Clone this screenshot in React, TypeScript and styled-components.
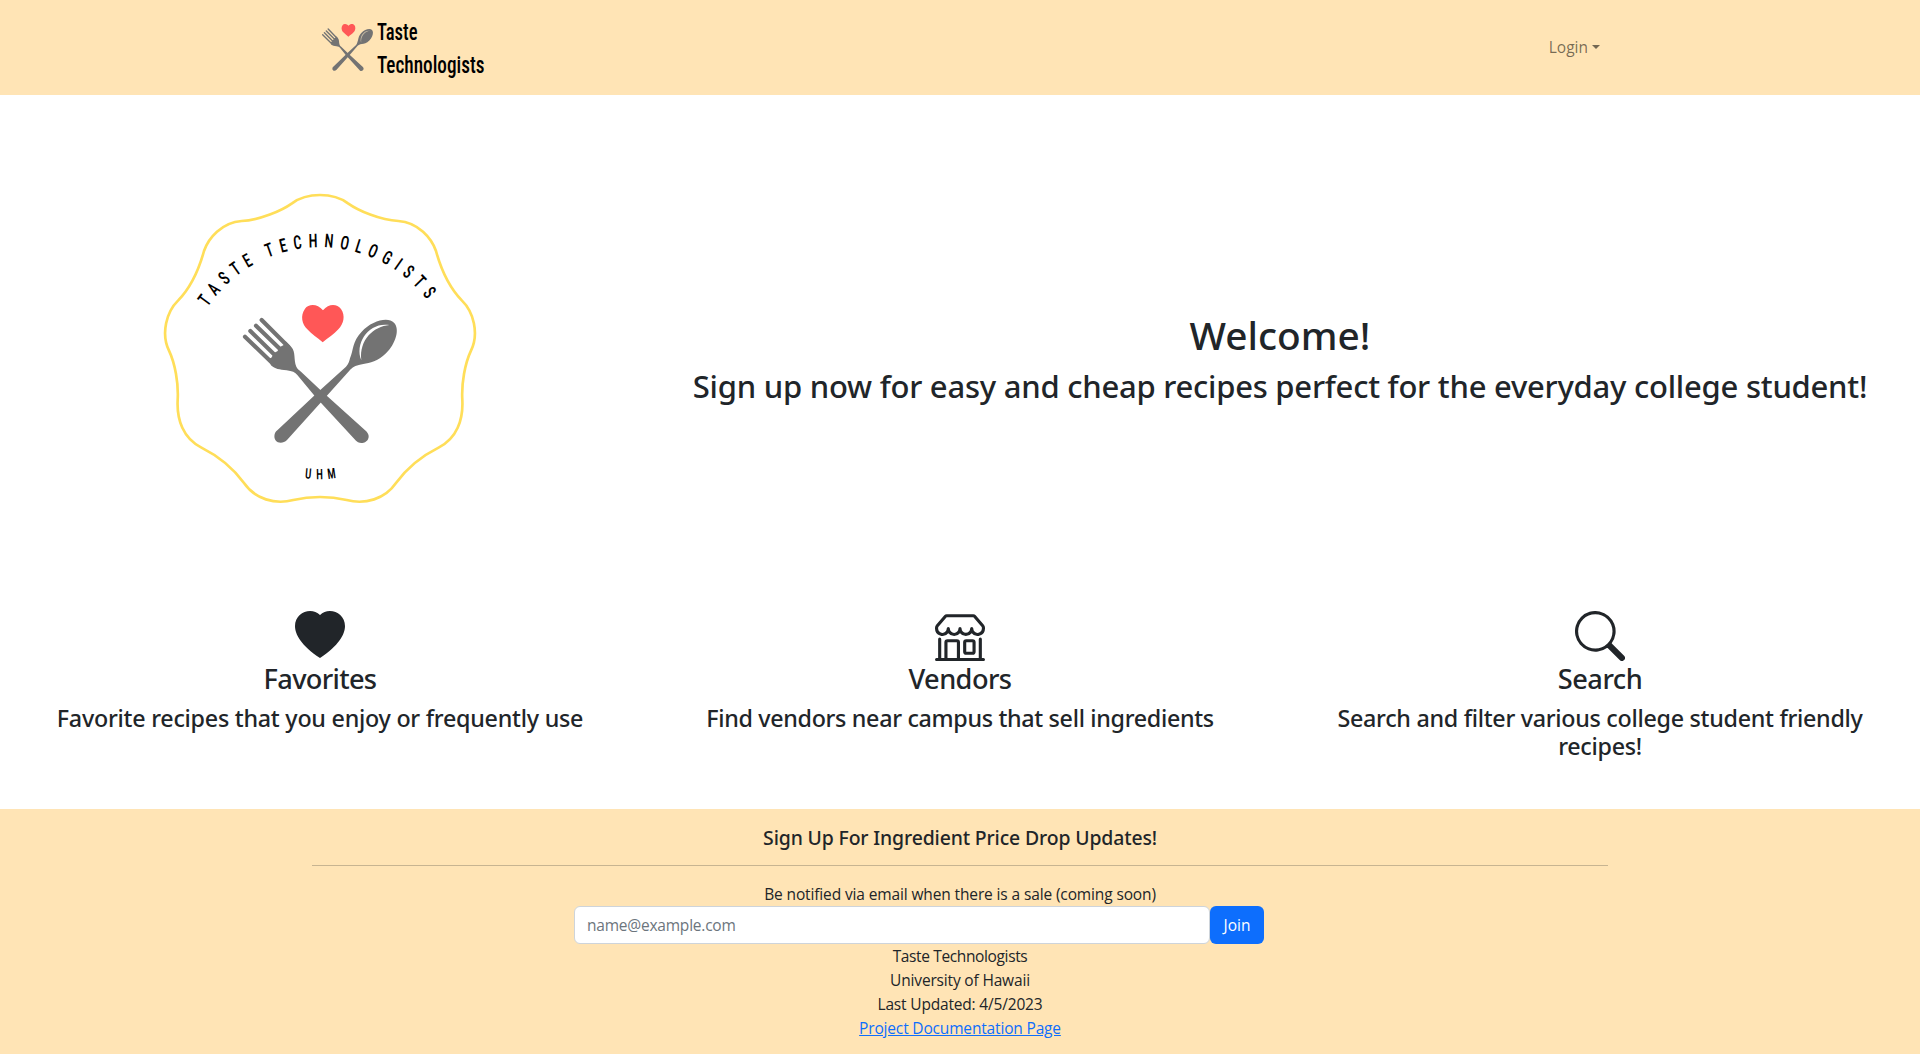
import React from 'react';
import styled, { createGlobalStyle } from 'styled-components';
import { BsHeartFill, BsShop, BsSearch } from 'react-icons/bs';

const ink = '#212529';
const cream = '#ffe4b5';
const bodyFont = '"Open Sans", "Noto Sans", sans-serif';
const headFont = '"Noto Sans", "Open Sans", sans-serif';

const GlobalStyle = createGlobalStyle`
  *, *::before, *::after { box-sizing: border-box; }
  body {
    margin: 0;
    background: #fff;
    color: ${ink};
    font: 400 15.5px/24px ${bodyFont};
  }
`;

const Page = styled.div`
  display: flex;
  flex-direction: column;
  min-height: 1054px;
`;

const NavBar = styled.nav`
  height: 95px;
  background: ${cream};
`;

const NavInner = styled.div`
  display: flex;
  align-items: center;
  justify-content: space-between;
  width: 1296px;
  height: 100%;
  margin: 0 auto;
  padding: 0 8px 0 9.5px;
`;

const Brand = styled.a`
  display: flex;
  align-items: center;
  gap: 4px;
`;

const BrandMark = styled.svg`
  width: 51px;
  height: 47px;
`;

const BrandName = styled.svg`
  width: 150px;
  height: 95px;
  overflow: visible;
  font: 500 23.6px "Roboto Condensed", Roboto, sans-serif;
`;

const LoginToggle = styled.a`
  display: flex;
  align-items: center;
  padding-bottom: 1px;
  color: rgba(0, 0, 0, 0.55);

  &::after {
    content: '';
    margin-left: 4px;
    border-top: 4.8px solid;
    border-right: 4.8px solid transparent;
    border-left: 4.8px solid transparent;
  }
`;

const Hero = styled.section`
  display: grid;
  grid-template-columns: 1fr 2fr;
  height: 516px;
`;

const HeroLogo = styled.div`
  display: flex;
  justify-content: center;
  padding-top: 85px;
`;

const Badge = styled.svg`
  width: 360px;
  height: 340px;
  font-family: "Roboto Condensed", Roboto, sans-serif;
  font-weight: 500;
`;

const HeroText = styled.div`
  padding-top: 215px;
  text-align: center;
`;

const Heading = styled.h2<{ $size: number; $line: number; $track?: number }>`
  margin: 0 0 7px;
  padding-top: 1px;
  font-family: ${headFont};
  font-weight: 500;
  font-size: ${(p) => p.$size}px;
  line-height: ${(p) => p.$line}px;
  letter-spacing: ${(p) => p.$track ?? 0}px;
`;

const Features = styled.section`
  display: grid;
  grid-template-columns: repeat(3, 1fr);
  height: 198px;
`;

const Feature = styled.div`
  display: flex;
  flex-direction: column;
  align-items: center;
  padding: 0 48px;
  text-align: center;

  > svg {
    width: 50px;
    height: 50px;
  }
`;

const Footer = styled.footer`
  flex: 1;
  padding-top: 16px;
  background: ${cream};
`;

const FooterInner = styled.div`
  width: 1296px;
  margin: 0 auto;
  text-align: center;
`;

const Rule = styled.hr`
  height: 1px;
  margin: 15px 0 16px;
  border: 0;
  background: ${ink};
  opacity: 0.25;
`;

const Line = styled.div<{ $track?: number }>`
  height: 24px;
  letter-spacing: ${(p) => p.$track ?? 0}px;
`;

const SignupRow = styled.form`
  display: flex;
  width: 690px;
  margin-left: 262px;
`;

const EmailInput = styled.input`
  flex: 1;
  height: 38px;
  padding: 6px 12px;
  border: 1px solid #ced4da;
  border-radius: 6px;
  background: #fff;
  font: 400 15.5px/24px ${bodyFont};
  letter-spacing: -0.22px;

  &::placeholder {
    color: #6c757d;
    opacity: 1;
  }
`;

const JoinButton = styled.button`
  width: 54px;
  height: 38px;
  padding: 0;
  border: 0;
  border-radius: 6px;
  background: #0d6efd;
  color: #fff;
  font: 400 15.5px/24px ${bodyFont};
`;

const DocLink = styled.a`
  color: #0d6efd;
  text-decoration: underline;
`;

function Utensils({ shine }: { shine: string }) {
  return (
    <>
      <path
        fill="#ff5757"
        d="M309 31C292 10 266 11 255 26C240 47 246 72 262 88C275 102 293 114 308 127C324 114 342 102 355 88C371 72 377 47 363 27C351 11 326 10 309 31Z"
      />
      <g stroke="#737373" strokeWidth="12.5" strokeLinecap="round">
        <path d="M75 110L160 192M91 93L165 166M108 77L183 150M125 60L205 140" />
      </g>
      <g fill="#737373">
        <path d="M146 176L154 173L163 158L172 154L181 140L190 136L197 124L214 141C228 156 220 178 229 200C232 207 237 210 243 215L302 271L437 392C459 412 437 436 414 427L408 422L286 290L232 225C226 217 216 213 200 211C178 209 165 207 153 196Z" />
        <path d="M390 175C401 150 396 125 425 95C455 62 504 49 522 68C541 88 526 132 498 160C473 184 450 189 430 192C410 195 400 200 392 208L320 288L201 420C185 436 158 428 164 402C166 396 170 392 176 387L300 271L378 200C385 193 388 184 390 175Z" />
      </g>
      <path fill={shine} d="M508 75C462 79 417 118 424 181C403 129 447 65 508 75Z" />
    </>
  );
}

const scallop =
  'M540 45C575 45 600 52 624 70C655 92 720 120 775 123C835 127 875 175 888 213C905 275 935 330 966 362C1000 395 1018 460 993 512C975 550 964 610 967 660C970 720 950 775 897 802C845 828 800 865 768 909C735 957 675 975 620 960C590 953 560 951 540 951';

export default function App() {
  return (
    <Page>
      <GlobalStyle />
      <NavBar>
        <NavInner>
          <Brand>
            <BrandMark viewBox="69 15 462 415" preserveAspectRatio="none">
              <Utensils shine="#c9bda6" />
            </BrandMark>
            <BrandName>
              <text x="0" y="40" textLength="40.5" lengthAdjust="spacingAndGlyphs">Taste</text>
              <text x="0" y="73" textLength="107.5" lengthAdjust="spacingAndGlyphs">Technologists</text>
            </BrandName>
          </Brand>
          <LoginToggle>Login</LoginToggle>
        </NavInner>
      </NavBar>

      <Hero>
        <HeroLogo>
          <Badge viewBox="0 0 1080 1020">
            <defs>
              <path id="arc-top" d="M190 402A406 406 0 0 1 890 402" />
              <path id="arc-bottom" d="M440 882A330 330 0 0 0 640 882" />
            </defs>
            <g fill="none" stroke="#ffde59" strokeWidth="8">
              <path d={scallop} />
              <path d={scallop} transform="translate(1080 0) scale(-1 1)" />
            </g>
            <text fontSize="57" letterSpacing="25">
              <textPath href="#arc-top" startOffset="24" textLength="786" lengthAdjust="spacingAndGlyphs">
                TASTE TECHNOLOGISTS
              </textPath>
            </text>
            <text fontSize="43" letterSpacing="20">
              <textPath href="#arc-bottom" startOffset="56" textLength="110" lengthAdjust="spacingAndGlyphs">
                UHM
              </textPath>
            </text>
            <g transform="translate(240 360)">
              <Utensils shine="#fff" />
            </g>
          </Badge>
        </HeroLogo>
        <HeroText>
          <Heading as="h1" $size={38.8} $line={48}>Welcome!</Heading>
          <Heading $size={31} $line={38.4} $track={-0.238}>
            Sign up now for easy and cheap recipes perfect for the everyday college student!
          </Heading>
        </HeroText>
      </Hero>

      <Features>
        <Feature>
          <BsHeartFill />
          <Heading as="h3" $size={27.2} $line={33.6} $track={-0.68}>Favorites</Heading>
          <Heading as="h4" $size={23.3} $line={28.8} $track={-0.255}>
            Favorite recipes that you enjoy or frequently use
          </Heading>
        </Feature>
        <Feature>
          <BsShop />
          <Heading as="h3" $size={27.2} $line={33.6} $track={-0.58}>Vendors</Heading>
          <Heading as="h4" $size={23.3} $line={28.8} $track={-0.325}>
            Find vendors near campus that sell ingredients
          </Heading>
        </Feature>
        <Feature>
          <BsSearch />
          <Heading as="h3" $size={27.2} $line={33.6} $track={-0.5}>Search</Heading>
          <Heading as="h4" $size={23.3} $line={28.8} $track={-0.292}>
            Search and filter various college student friendly recipes!
          </Heading>
        </Feature>
      </Features>

      <Footer>
        <FooterInner>
          <Heading as="h5" $size={19.4} $line={24} $track={-0.134}>
            Sign Up For Ingredient Price Drop Updates!
          </Heading>
          <Rule />
          <Line $track={-0.13}>Be notified via email when there is a sale (coming soon)</Line>
          <SignupRow>
            <EmailInput type="email" placeholder="name@example.com" />
            <JoinButton type="button">Join</JoinButton>
          </SignupRow>
          <Line $track={-0.367}>Taste Technologists</Line>
          <Line $track={-0.17}>University of Hawaii</Line>
          <Line $track={-0.18}>Last Updated: 4/5/2023</Line>
          <Line $track={-0.168}>
            <DocLink href="#">Project Documentation Page</DocLink>
          </Line>
        </FooterInner>
      </Footer>
    </Page>
  );
}
